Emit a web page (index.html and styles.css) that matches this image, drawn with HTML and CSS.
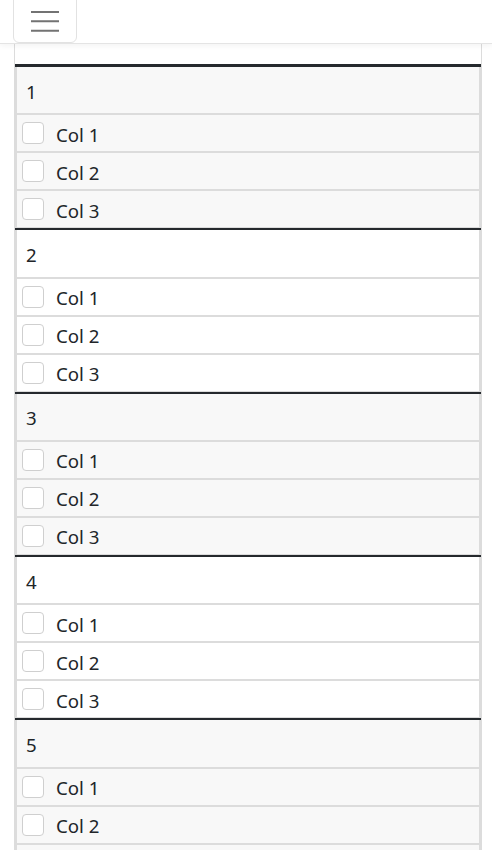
FILE: index.html
```html
<!DOCTYPE html>
<html lang="en">
<head>
<meta charset="utf-8">
<title>Table</title>
<link rel="stylesheet" href="styles.css">
</head>
<body>
<header class="topbar">
  <button class="toggler" type="button" aria-label="Toggle navigation">
    <svg class="toggler-icon" width="28" height="22" viewBox="0 0 28 22" aria-hidden="true">
      <path d="M0 1H28M0 10.33H28M0 19.67H28" stroke="#737373" stroke-width="2" fill="none"/>
    </svg>
  </button>
</header>
<div class="table">
  <div class="thead"></div>
  <div class="group first odd">
    <div class="row head">1</div>
    <label class="row item"><span class="check"></span>Col 1</label>
    <label class="row item"><span class="check"></span>Col 2</label>
    <label class="row item"><span class="check"></span>Col 3</label>
  </div>
  <div class="group">
    <div class="row head">2</div>
    <label class="row item"><span class="check"></span>Col 1</label>
    <label class="row item"><span class="check"></span>Col 2</label>
    <label class="row item"><span class="check"></span>Col 3</label>
  </div>
  <div class="group odd">
    <div class="row head">3</div>
    <label class="row item"><span class="check"></span>Col 1</label>
    <label class="row item"><span class="check"></span>Col 2</label>
    <label class="row item"><span class="check"></span>Col 3</label>
  </div>
  <div class="group">
    <div class="row head">4</div>
    <label class="row item"><span class="check"></span>Col 1</label>
    <label class="row item"><span class="check"></span>Col 2</label>
    <label class="row item"><span class="check"></span>Col 3</label>
  </div>
  <div class="group odd">
    <div class="row head">5</div>
    <label class="row item"><span class="check"></span>Col 1</label>
    <label class="row item"><span class="check"></span>Col 2</label>
    <label class="row item"><span class="check"></span>Col 3</label>
  </div>
</div>
</body>
</html>
```
FILE: styles.css
```css
html, body {
  margin: 0;
  background: #fff;
}
body {
  font-family: "Noto Sans", "Open Sans", sans-serif;
  color: #212529;
  overflow: hidden;
}
.topbar {
  position: relative;
  z-index: 1;
  height: 43px;
  padding-left: 13px;
  background: #fff;
  border-bottom: 1px solid #e4e4e4;
  box-shadow: 0 2px 6px rgba(0, 0, 0, 0.05);
  display: flex;
  align-items: flex-end;
}
.toggler {
  flex: none;
  width: 64px;
  height: 57px;
  padding: 24px 0 0;
  margin: 0;
  border: 1px solid #e2e2e2;
  border-radius: 6px;
  background: #fff;
  display: flex;
  justify-content: center;
  align-items: flex-start;
}
.toggler-icon {
  display: block;
}
.table {
  margin-left: 14px;
  width: 466px;
  border-left: 1px solid #dcdcdc;
  border-right: 1px solid #dcdcdc;
}
.thead {
  height: 20px;
}
.group {
  border-top: 2px solid #25292d;
}
.group.first {
  border-top-width: 3px;
}
.group.odd {
  background: #f8f8f8;
}
.row {
  display: flex;
  align-items: center;
  font-size: 18.67px;
  padding-top: 2px;
  border-left: 2px solid #dcdcdc;
  border-right: 2px solid #dcdcdc;
  border-bottom: 2px solid #dcdcdc;
}
.head {
  height: 44.33px;
  padding-left: 9px;
}
.item {
  height: 34px;
  padding-left: 5px;
}
.item:last-child {
  border-bottom-width: 1px;
}
.check {
  flex: none;
  width: 20px;
  height: 20px;
  margin: -2px 12px 0 0;
  border: 1px solid #cfcfcf;
  border-radius: 4px;
  background: #fff;
}
```
